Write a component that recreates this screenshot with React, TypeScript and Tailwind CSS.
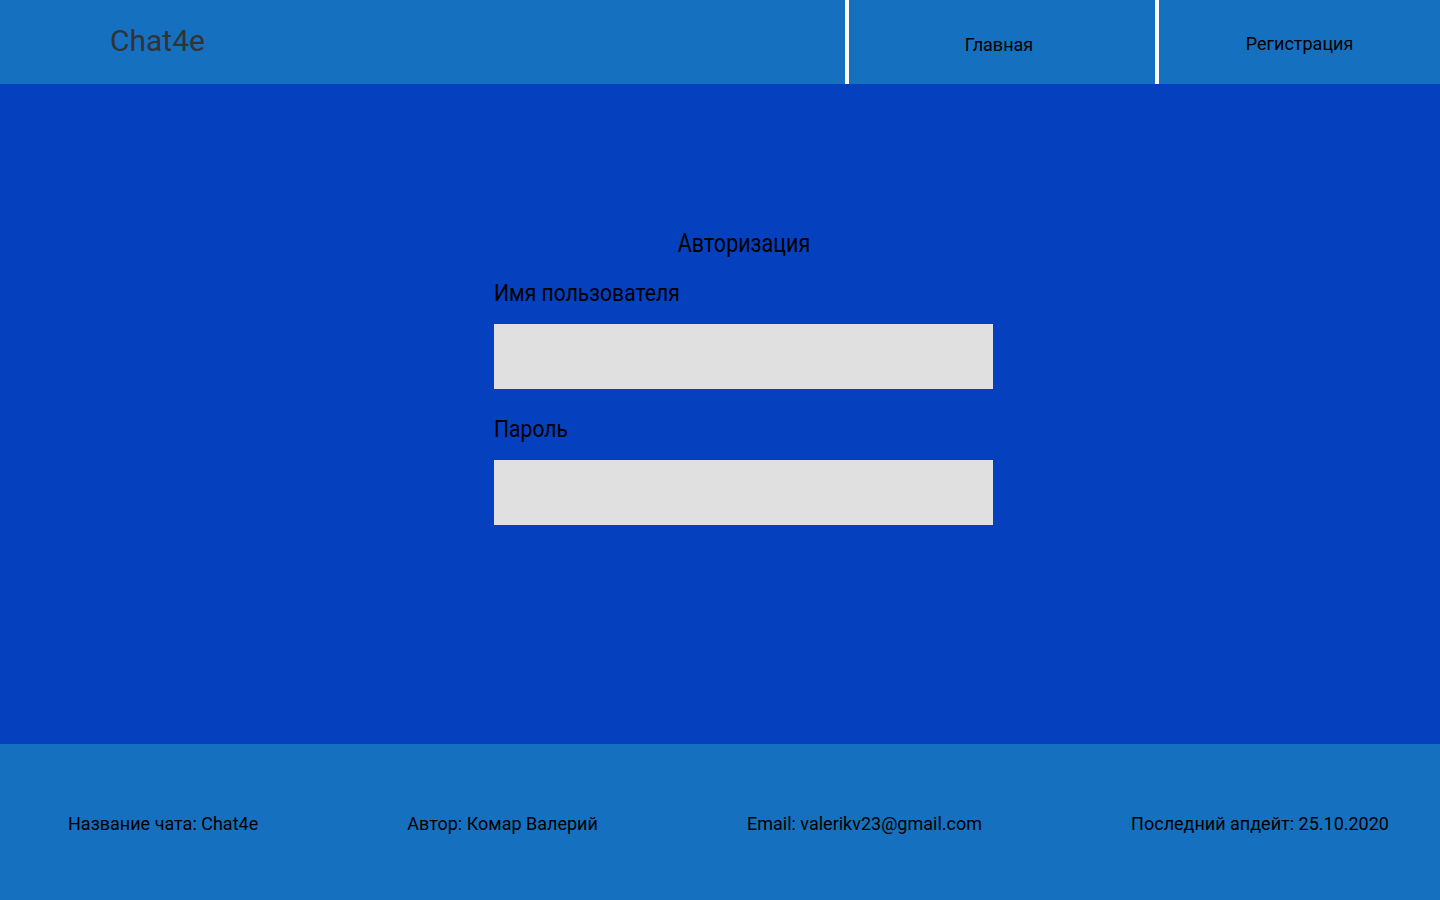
import React from 'react';

export default function App() {
  return (
    <div className="flex min-h-screen flex-col font-['Roboto',sans-serif]">
      {/* Header */}
      <header className="flex h-[84px] bg-[#1570bf]">
        <div className="flex flex-1 items-center pl-[110px] pb-[4px]">
          <span className="text-[30px] text-[#333333]">Chat4e</span>
        </div>
        <nav className="flex">
          <a className="flex w-[310px] items-center justify-center border-l-4 border-white pt-[4px] pr-[6px] text-[18px] text-black">
            Главная
          </a>
          <a className="flex w-[285px] items-center justify-center border-l-4 border-white pt-[2px] text-[18px] text-black">
            Регистрация
          </a>
        </nav>
      </header>

      {/* Main */}
      <main className="flex h-[660px] flex-col items-start bg-[#0540bf] pt-[147px] pl-[494px]">
        <div className="flex w-[499px] flex-col">
          <h1 className="text-center text-[25px] leading-[26px] text-black">
            <span className="inline-block scale-x-[0.86]">Авторизация</span>
          </h1>
          <label className="mt-[22px] text-[24px] leading-[28px] text-black">
            <span className="inline-block origin-left scale-x-[0.88]">Имя пользователя</span>
          </label>
          <input className="mt-[17px] h-[65px] w-full bg-[#e0e0e0] outline-none" />
          <label className="mt-[26px] text-[24px] leading-[28px] text-black">
            <span className="inline-block origin-left scale-x-[0.88]">Пароль</span>
          </label>
          <input type="password" className="mt-[17px] h-[65px] w-full bg-[#e0e0e0] outline-none" />
        </div>
      </main>

      {/* Footer */}
      <footer className="flex h-[156px] items-center justify-between bg-[#1570bf] pt-[2px] pl-[68px] pr-[51px] text-[18px] text-black">
        <span>Название чата: Chat4e</span>
        <span>Автор: Комар Валерий</span>
        <span>Email: valerikv23@gmail.com</span>
        <span>Последний апдейт: 25.10.2020</span>
      </footer>
    </div>
  );
}
